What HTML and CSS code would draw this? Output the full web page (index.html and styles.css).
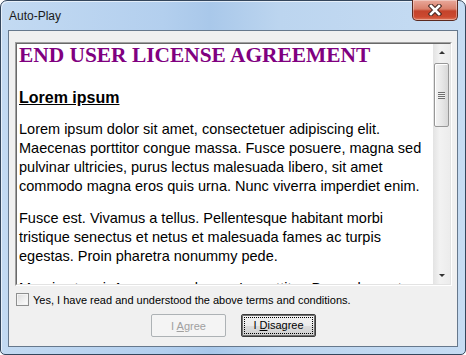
FILE: index.html
```html
<!DOCTYPE html>
<html lang="en">
<head>
  <meta charset="UTF-8">
  <title>Auto-Play</title>
  <link rel="stylesheet" href="styles.css">
</head>
<body>
  <div class="window">
    <div class="titlebar">
      <span class="title">Auto-Play</span>
      <button class="close-btn" aria-label="Close">
        <svg width="14" height="12" viewBox="0 0 14 12" aria-hidden="true">
          <path d="M3 2 L11 10 M11 2 L3 10" stroke="#4a2a24" stroke-width="4.6" stroke-linecap="square"/>
          <path d="M3 2 L11 10 M11 2 L3 10" stroke="#ffffff" stroke-width="2.6" stroke-linecap="square"/>
        </svg>
      </button>
    </div>

    <div class="client">
      <div class="license-box">
        <div class="license-view">
          <div class="license-text">
            <h1>END USER LICENSE AGREEMENT</h1>
            <h2>Lorem ipsum</h2>
            <p>Lorem ipsum dolor sit amet, consectetuer adipiscing elit. Maecenas porttitor congue massa. Fusce posuere, magna sed pulvinar ultricies, purus lectus malesuada libero, sit amet commodo magna eros quis urna. Nunc viverra imperdiet enim.</p>
            <p>Fusce est. Vivamus a tellus. Pellentesque habitant morbi tristique senectus et netus et malesuada fames ac turpis egestas. Proin pharetra nonummy pede.</p>
            <p>Mauris et orci. Aenean nec lorem. In porttitor. Donec laoreet nonummy augue.</p>
          </div>
          <div class="scrollbar" aria-hidden="true">
            <span class="sb-arrow"><span class="tri-up"></span></span>
            <span class="sb-track">
              <span class="sb-thumb"><span class="grip"></span></span>
            </span>
            <span class="sb-arrow"><span class="tri-down"></span></span>
          </div>
        </div>
      </div>

      <label class="accept">
        <span class="checkbox"></span>
        Yes, I have read and understood the above terms and conditions.
      </label>

      <div class="buttons">
        <button class="btn" disabled>I <u>A</u>gree</button>
        <button class="btn btn-default"><span class="focus">I <u>D</u>isagree</span></button>
      </div>
    </div>
  </div>
</body>
</html>
```

FILE: styles.css
```css
html, body { margin: 0; padding: 0; }
body { width: 466px; height: 355px; overflow: hidden; background: #ffffff; }

.window {
  width: 466px; height: 355px; box-sizing: border-box;
  border: 1px solid #34465c; border-radius: 7px 7px 5px 5px;
  padding: 0 7px 7px;
  display: flex; flex-direction: column;
  background: linear-gradient(90deg, #c3daf2 0%, #b3cfee 35%, #a9c8ea 45%, #bcd5ef 60%, #c6dcf3 100%);
  box-shadow: inset 1px 1px 0 rgba(255,255,255,0.6);
}

.titlebar { height: 29px; display: flex; align-items: flex-start; }
.title {
  font-family: "Liberation Sans", Arial, sans-serif; font-size: 12px; color: #1a1a1a;
  margin-top: 8px; margin-left: 1px;
}
.close-btn {
  margin-left: auto; margin-top: -1px; width: 46px; height: 21px; padding: 0;
  border: 1px solid #5b2a20; border-top: 0; border-radius: 0 0 5px 5px;
  background: linear-gradient(180deg, #e9a99b 0%, #d9806c 45%, #c4432b 55%, #cc4a30 85%, #e07a5e 100%);
  box-shadow: inset 0 0 0 1px rgba(255,255,255,0.35);
  display: flex; align-items: center; justify-content: center;
}

.client {
  flex: 1; border: 1px solid #66788c; background: #f0f0f0;
  padding: 11px 5px 0 6px;
  display: flex; flex-direction: column;
}

.license-box {
  height: 244px; box-sizing: border-box;
  border: 1px solid; border-color: #a0a0a0 #ffffff #ffffff #a0a0a0;
}
.license-view {
  height: 100%; box-sizing: border-box; display: flex; background: #ffffff;
  border: 1px solid; border-color: #696969 #e3e3e3 #e3e3e3 #696969;
}
.license-text {
  flex: 1; overflow: hidden; padding: 0 2px;
  font-family: "Liberation Sans", Arial, sans-serif; font-size: 14.5px; line-height: 19px; color: #000;
}
.license-text h1 {
  font-family: "Liberation Serif", "Times New Roman", serif; font-size: 21.4px; line-height: 23px;
  color: #800080; font-weight: bold; margin: 0 0 21px;
}
.license-text h2 {
  font-size: 16px; line-height: 19px; font-weight: bold; text-decoration: underline; margin: 0 0 13px;
}
.license-text p { margin: 0 0 13px; }

.scrollbar { width: 17px; display: flex; flex-direction: column; background: linear-gradient(90deg, #e3e3e3, #f2f2f2 40%, #ececec); }
.sb-arrow { height: 17px; display: flex; align-items: center; justify-content: center; }
.tri-up, .tri-down { width: 0; height: 0; border-left: 3px solid transparent; border-right: 3px solid transparent; }
.tri-up { border-bottom: 3px solid #333; }
.tri-down { border-top: 3px solid #333; }
.sb-track { flex: 1; }
.sb-thumb {
  display: flex; align-items: center; justify-content: center;
  height: 64px; margin: 2px 1px 0; box-sizing: border-box;
  border: 1px solid #979797; border-radius: 2px;
  background: linear-gradient(90deg, #f3f3f3, #e8e8e8 50%, #d8d8d8);
  box-shadow: inset 1px 1px 0 #ffffff;
}
.grip { width: 7px; height: 7px; background: repeating-linear-gradient(180deg, #6f6f6f 0 1px, #f0f0f0 1px 2px); }

.accept {
  display: flex; align-items: center; height: 13px; margin-top: 7px; margin-left: 1px;
  font-family: "Liberation Sans", Arial, sans-serif; font-size: 11px; color: #000;
}
.checkbox {
  width: 13px; height: 13px; box-sizing: border-box; margin-right: 4px; flex-shrink: 0;
  border: 1px solid #8e8f8f;
  background: linear-gradient(135deg, #dcdcdc, #ffffff);
  box-shadow: inset 0 0 0 1px #f4f4f4;
}

.buttons { display: flex; justify-content: center; gap: 15px; margin-top: 8px; }
.btn {
  width: 75px; height: 23px; padding: 0; box-sizing: border-box;
  font-family: "Liberation Sans", Arial, sans-serif; font-size: 11px; color: #000;
  border: 1px solid #707070; border-radius: 2px;
  background: linear-gradient(180deg, #f2f2f2 0%, #ebebeb 50%, #dddddd 51%, #cfcfcf 100%);
}
.btn:disabled { color: #a0a0a0; border-color: #adb2b5; background: #f4f4f4; }
.btn-default { border-color: #3c3c3c; box-shadow: inset 0 0 0 1px #707070; padding: 3px; }
.focus {
  display: block; height: 15px; line-height: 15px; text-align: center;
  outline: 1px dotted #000;
}
```
